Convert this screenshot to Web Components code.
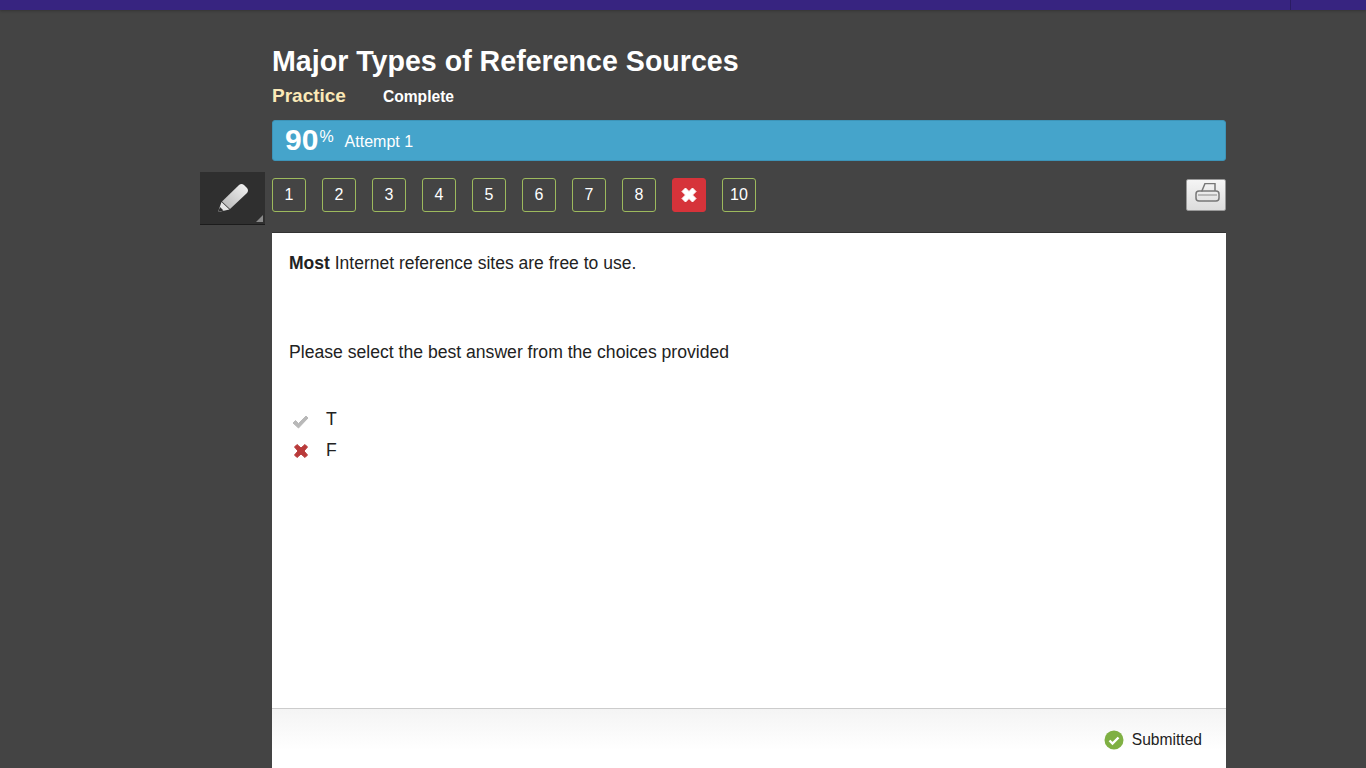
<!DOCTYPE html>
<html>
<head>
<meta charset="utf-8">
<title>Major Types of Reference Sources</title>
<style>
  html, body { margin: 0; height: 768px; overflow: hidden; }
  body { background: #444; font-family: "Liberation Sans", Arial, sans-serif; }
</style>
</head>
<body>
<top-bar></top-bar>
<activity-page>
  <activity-header slot="header" title="Major Types of Reference Sources"></activity-header>
  <score-bar slot="score" score="90" attempt="Attempt 1"></score-bar>
  <tool-button slot="tool"></tool-button>
  <question-nav slot="nav"></question-nav>
  <question-card slot="card"></question-card>
</activity-page>

<script>
class TopBar extends HTMLElement {
  constructor() {
    super();
    this.attachShadow({ mode: "open" });
  }
  connectedCallback() {
    this.shadowRoot.innerHTML = `
      <style>
        :host { display: flex; justify-content: flex-end; height: 10px; background: #372480; box-shadow: 0 1px 3px rgba(0,0,0,.25); }
        .sep { width: 1px; margin-right: 75px; background: #2a1c63; }
      </style>
      <div class="sep"></div>`;
  }
}

class ActivityPage extends HTMLElement {
  constructor() {
    super();
    this.attachShadow({ mode: "open" });
  }
  connectedCallback() {
    this.shadowRoot.innerHTML = `
      <style>
        :host { display: grid; grid-template-columns: 65px 954px; column-gap: 7px; padding: 0 0 0 200px; }
        .top { grid-column: 2; }
        .tool { grid-column: 1; padding-top: 11px; }
        .main { grid-column: 2; }
      </style>
      <div class="top"><slot name="header"></slot><slot name="score"></slot></div>
      <div class="tool"><slot name="tool"></slot></div>
      <div class="main"><slot name="nav"></slot><slot name="card"></slot></div>`;
  }
}

class ActivityHeader extends HTMLElement {
  constructor() {
    super();
    this.attachShadow({ mode: "open" });
  }
  connectedCallback() {
    this.shadowRoot.innerHTML = `
      <style>
        :host { display: block; padding-top: 33px; height: 77px; }
        h1 { margin: 0; font-size: 28.6px; line-height: 36px; font-weight: bold; color: #fff; }
        .tabs { display: flex; align-items: baseline; gap: 37px; margin-top: 6px; line-height: 22px; font-weight: bold; }
        .on { font-size: 19px; color: #fbe9b7; }
        .off { font-size: 15.6px; color: #fff; }
      </style>
      <h1>${this.getAttribute("title")}</h1>
      <div class="tabs"><span class="on">Practice</span><span class="off">Complete</span></div>`;
  }
}

class ScoreBar extends HTMLElement {
  constructor() {
    super();
    this.attachShadow({ mode: "open" });
  }
  connectedCallback() {
    this.shadowRoot.innerHTML = `
      <style>
        :host { display: flex; align-items: center; box-sizing: border-box; height: 41px; padding: 0 12px; background: #45a4cb; border-radius: 3px; border: 1px solid #3d94b8; color: #fff; }
        .num { font-size: 30px; font-weight: bold; line-height: 36px; position: relative; top: -1px; }
        .pct { font-size: 16px; line-height: 20px; align-self: flex-start; margin: 6px 0 0 1px; }
        .att { font-size: 16px; margin-left: 11px; position: relative; top: 1px; }
      </style>
      <span class="num">${this.getAttribute("score")}</span><span class="pct">%</span><span class="att">${this.getAttribute("attempt")}</span>`;
  }
}

class ToolButton extends HTMLElement {
  constructor() {
    super();
    this.attachShadow({ mode: "open" });
  }
  connectedCallback() {
    this.shadowRoot.innerHTML = `
      <style>
        :host { display: flex; align-items: center; justify-content: center; position: relative; width: 65px; height: 53px; box-sizing: border-box; background: #2f2f2f; border-bottom: 1px solid #1c1c1c; }
        .corner { position: absolute; right: 2px; bottom: 2px; width: 0; height: 0; border-style: solid; border-width: 0 0 7px 7px; border-color: transparent transparent #8a8a8a transparent; }
      </style>
      <svg width="36" height="36" viewBox="0 0 36 36">
        <defs><linearGradient id="p" x1="0" y1="1" x2="1" y2="0"><stop offset="0" stop-color="#b5b5b5"/><stop offset="1" stop-color="#f4f4f4"/></linearGradient></defs>
        <path d="M7 21.500 24 5q2.500-2 5 0l3 3q2 2.500 0 5L15 29z" fill="url(#p)"/>
        <path d="M6.500 22 14.500 29.500 3 32z" fill="#e6e6e6"/>
        <path d="M3 32 5 27 8.500 30.500z" fill="#2f2f2f"/>
      </svg>
      <div class="corner"></div>`;
  }
}

class NavItem extends HTMLElement {
  constructor() {
    super();
    this.attachShadow({ mode: "open" });
  }
  connectedCallback() {
    const wrong = this.hasAttribute("wrong");
    this.shadowRoot.innerHTML = `
      <style>
        :host { display: flex; align-items: center; justify-content: center; box-sizing: border-box; width: 34px; height: 34px; border-radius: 3px; border: 1px solid ${wrong ? "#d6333a" : "#9dba5d"}; background: ${wrong ? "#d6333a" : "transparent"}; color: #fff; font-size: 16px; }
      </style>
      <slot></slot>`;
  }
}

class QuestionNav extends HTMLElement {
  constructor() {
    super();
    this.attachShadow({ mode: "open" });
  }
  connectedCallback() {
    const items = [];
    for (let i = 1; i <= 10; i++) {
      if (i === 9) {
        items.push(`<nav-item wrong><svg width="18" height="18" viewBox="0 0 18 18"><path d="M2 5.500 5.500 2 9 5.500 12.500 2 16 5.500 12.500 9 16 12.500 12.500 16 9 12.500 5.500 16 2 12.500 5.500 9z" fill="#fff" stroke="#fff" stroke-linejoin="round"/></svg></nav-item>`);
      } else {
        items.push(`<nav-item>${i}</nav-item>`);
      }
    }
    this.shadowRoot.innerHTML = `
      <style>
        :host { display: flex; align-items: center; justify-content: space-between; height: 71px; padding-bottom: 3px; box-sizing: border-box; }
        .list { display: flex; gap: 16px; }
        .print { display: flex; align-items: center; justify-content: center; box-sizing: border-box; width: 40px; height: 32px; background: linear-gradient(#f5f5f5, #dcdcdc); border: 1px solid #999; border-radius: 2px; }
      </style>
      <div class="list">${items.join("")}</div>
      <div class="print">
        <svg width="28" height="24" viewBox="0 1 28 24" fill="none" stroke="#777" stroke-width="1.500" stroke-linejoin="round">
          <path d="M9.700 9.500 13 1.500H23V9"/>
          <rect x="4" y="9" width="23" height="10" rx="3"/>
          <path d="M6 13H25" stroke="#aaa"/>
        </svg>
      </div>`;
  }
}

class QuestionCard extends HTMLElement {
  constructor() {
    super();
    this.attachShadow({ mode: "open" });
  }
  connectedCallback() {
    this.shadowRoot.innerHTML = `
      <style>
        :host { display: block; background: #fff; color: #222; font-size: 17.6px; border-top: 1px solid #333; }
        .body { box-sizing: border-box; height: 475px; padding: 19px 16px 0 17px; }
        p { margin: 0; line-height: 22px; }
        .lead { font-size: 17.5px; }
        .prompt { margin-top: 67px; }
        .answers { margin-top: 45px; display: flex; flex-direction: column; gap: 9px; }
        .answer { display: flex; align-items: center; height: 22px; gap: 15px; }
        .answer svg { display: block; flex: none; margin-top: 3px; }
        .foot { display: flex; align-items: center; justify-content: flex-end; box-sizing: border-box; height: 60px; padding: 3px 24px 0 0; gap: 8px; border-top: 1px solid #ccc; background: linear-gradient(#f4f4f4, #fff 70%); font-size: 15.6px; }
      </style>
      <div class="body">
        <p class="lead"><b>Most</b> Internet reference sites are free to use.</p>
        <p class="prompt">Please select the best answer from the choices provided</p>
        <div class="answers">
          <div class="answer">
            <svg width="22" height="22" viewBox="0 0 22 22"><path d="M4 13 6.500 10.500 9.500 13.500 17 6 19 8 9.500 18z" fill="#b9b9b9" stroke="#b9b9b9" stroke-linejoin="round"/></svg>
            <span>T</span>
          </div>
          <div class="answer">
            <svg width="22" height="22" viewBox="0 2 22 22"><path d="M5.500 8 8 5.500 12 9 16 5.500 18.500 8 15 12 18.500 16 16 18.500 12 15 8 18.500 5.500 16 9 12z" fill="#b93a3a" stroke="#b93a3a" stroke-linejoin="round"/></svg>
            <span>F</span>
          </div>
        </div>
      </div>
      <div class="foot">
        <svg width="20" height="20" viewBox="0 0 20 20"><circle cx="10" cy="10" r="9.500" fill="#7fb043"/><path d="M5.500 10.500 8.500 13.500 14.500 7.500" fill="none" stroke="#fff" stroke-width="2.400"/></svg>
        <span>Submitted</span>
      </div>`;
  }
}

customElements.define("top-bar", TopBar);
customElements.define("activity-page", ActivityPage);
customElements.define("activity-header", ActivityHeader);
customElements.define("score-bar", ScoreBar);
customElements.define("tool-button", ToolButton);
customElements.define("nav-item", NavItem);
customElements.define("question-nav", QuestionNav);
customElements.define("question-card", QuestionCard);
</script>
</body>
</html>
